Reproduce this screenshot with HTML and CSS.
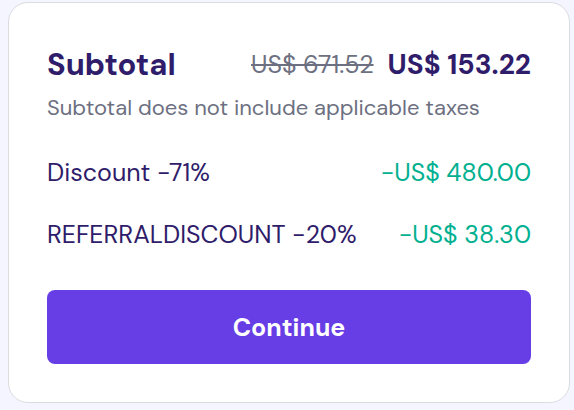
FILE: index.html
```html
<!DOCTYPE html>
<html>
<head>
<meta charset="utf-8">
<link rel="stylesheet" href="styles.css">
</head>
<body>
<div class="card">
  <div class="head-row">
    <span class="title">Subtotal</span>
    <span class="prices"><span class="old">US$ 671.52</span><span class="new">US$ 153.22</span></span>
  </div>
  <p class="note">Subtotal does not include applicable taxes</p>
  <div class="row row-first">
    <span class="label">Discount -71%</span>
    <span class="amount">-US$ 480.00</span>
  </div>
  <div class="row row-second">
    <span class="label">REFERRALDISCOUNT -20%</span>
    <span class="amount">-US$ 38.30</span>
  </div>
  <button class="btn">Continue</button>
</div>
</body>
</html>
```

FILE: styles.css
```css
html, body {
  margin: 0;
  padding: 0;
  background: #f4f5ff;
}
body {
  font-family: "DM Sans", Inter, "Noto Sans", sans-serif;
  padding: 2px 0 0 8px;
  width: 574px;
  height: 410px;
  box-sizing: border-box;
  overflow: hidden;
}
.card {
  box-sizing: border-box;
  width: 562px;
  height: 401px;
  background: #fff;
  border: 1px solid #dadce0;
  border-radius: 20px;
  padding: 44px 38px 38px;
  display: flex;
  flex-direction: column;
}
.head-row {
  display: flex;
  justify-content: space-between;
  align-items: center;
  height: 34px;
}
.title {
  font-size: 31px;
  font-weight: 700;
  color: #2f1c6a;
}
.prices {
  display: flex;
  align-items: center;
  gap: 14px;
}
.old {
  font-size: 25px;
  color: #6d7081;
  text-decoration: line-through;
  text-decoration-thickness: 2px;
}
.new {
  font-size: 28px;
  font-weight: 700;
  color: #2f1c6a;
}
.note {
  margin: 13px 0 0;
  font-size: 22px;
  line-height: 28px;
  color: #6d7081;
}
.row {
  display: flex;
  justify-content: space-between;
  align-items: center;
  height: 28px;
  font-size: 25px;
}
.row-first { margin-top: 36px; }
.row-second { margin-top: 34px; }
.label { color: #2f1c6a; }
.amount { color: #00b090; }
.btn {
  margin-top: 42px;
  height: 74px;
  border: none;
  border-radius: 8px;
  background: #673de6;
  color: #fff;
  font-family: inherit;
  font-size: 25px;
  font-weight: 700;
  cursor: pointer;
}
```
